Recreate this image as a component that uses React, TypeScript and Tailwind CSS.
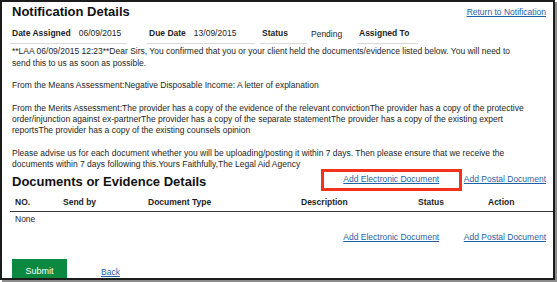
const LINK = "text-[#1f5fa6] underline underline-offset-1";

type InfoCell = { label?: string; value?: string; cls: string; bordered: boolean };

const INFO: InfoCell[] = [
  { label: "Date Assigned", value: "06/09/2015", cls: "w-[117px] mr-[20px]", bordered: true },
  { label: "Due Date", value: "13/09/2015", cls: "w-[108px] mr-[5px]", bordered: true },
  { label: "Status", cls: "w-[47px] mr-[2px]", bordered: true },
  { value: "Pending", cls: "w-[48px]", bordered: false },
  { label: "Assigned To", cls: "w-[61px]", bordered: true },
];

const COLUMNS = ["NO.", "Send by", "Document Type", "Description", "Status", "Action"];

function DocLinks({ boxed }: { boxed?: boolean }) {
  return (
    <div className="flex items-center">
      <div
        className={
          boxed
            ? "flex h-[22px] w-[141px] items-center justify-center border-[3px] border-[#f4311c]"
            : "flex h-[22px] w-[141px] items-center justify-center"
        }
      >
        <a href="#" className={LINK}>
          Add Electronic Document
        </a>
      </div>
      <a href="#" className={`ml-[2px] ${LINK}`}>
        Add Postal Document
      </a>
    </div>
  );
}

export default function App() {
  return (
    <div className="h-[282px] w-[557px] overflow-hidden bg-white font-['Liberation_Sans',Arial,sans-serif] text-[8.5px] leading-[11.4px] text-[#1e1e1e]">
      <div className="h-[280px] w-[555px] overflow-hidden border-2 border-[#1c1c1c] bg-white pl-[8px] pr-[5px] shadow-[2px_2px_0_#8c8c8c]">
        <div className="flex items-start justify-between px-[2px] pt-[2px]">
          <h1 className="text-[13px] font-bold leading-[16px] text-[#111]">
            Notification Details
          </h1>
          <a href="#" className={`mt-[3px] ${LINK}`}>
            Return to Notification
          </a>
        </div>

        <div className="mt-[8px] flex">
          {INFO.map((c, i) => (
            <div
              key={i}
              className={`${c.cls} flex shrink-0 items-center gap-[8px] pb-[4px] pl-[2px] ${
                c.bordered ? "border-b border-[#d9d9d9]" : ""
              }`}
            >
              {c.label ? <span className="font-bold">{c.label}</span> : null}
              {c.value ? <span>{c.value}</span> : null}
            </div>
          ))}
        </div>

        <div className="mt-[2px] space-y-[11px] px-[2px]">
          <p>
            **LAA 06/09/2015 12:23**Dear Sirs, You confirmed that you or your client held the
            documents/evidence listed below. You will need to
            <br />
            send this to us as soon as possible.
          </p>
          <p>From the Means Assessment:Negative Disposable Income: A letter of explanation</p>
          <p>
            From the Merits Assessment:The provider has a copy of the evidence of the relevant
            convictionThe provider has a copy of the protective order/injunction against
            ex-partnerThe provider has a copy of the separate statementThe provider has a copy of
            the existing expert reportsThe provider has a copy of the existing counsels opinion
          </p>
          <p>
            Please advise us for each document whether you will be uploading/posting it within 7
            days. Then please ensure that we receive the documents within 7 days following
            this.Yours Faithfully,The Legal Aid Agency
          </p>
        </div>

        <div className="-mt-[2px] flex h-[27px] items-start justify-between px-[2px]">
          <h2 className="mt-[5px] text-[13px] font-bold leading-[16px] text-[#111]">
            Documents or Evidence Details
          </h2>
          <DocLinks boxed />
        </div>

        <div className="-mr-[5px] mt-[1px]">
          <div className="grid grid-cols-[48px_85px_153px_117px_70px_1fr] border-b border-[#3a3a3a] pb-[3px] pl-[5px] font-bold">
            {COLUMNS.map((h) => (
              <div key={h}>{h}</div>
            ))}
          </div>
          <div className="pl-[5px] pt-[2px]">None</div>
        </div>

        <div className="mt-[1px] flex justify-end pr-[2px]">
          <DocLinks />
        </div>

        <div className="mt-[11px] flex items-center pl-[2px]">
          <button
            type="button"
            className="h-[24px] w-[55px] bg-[#0b8940] text-[9px] text-white"
          >
            Submit
          </button>
          <a href="#" className={`ml-[34px] mt-[3px] ${LINK}`}>
            Back
          </a>
        </div>
      </div>
    </div>
  );
}
